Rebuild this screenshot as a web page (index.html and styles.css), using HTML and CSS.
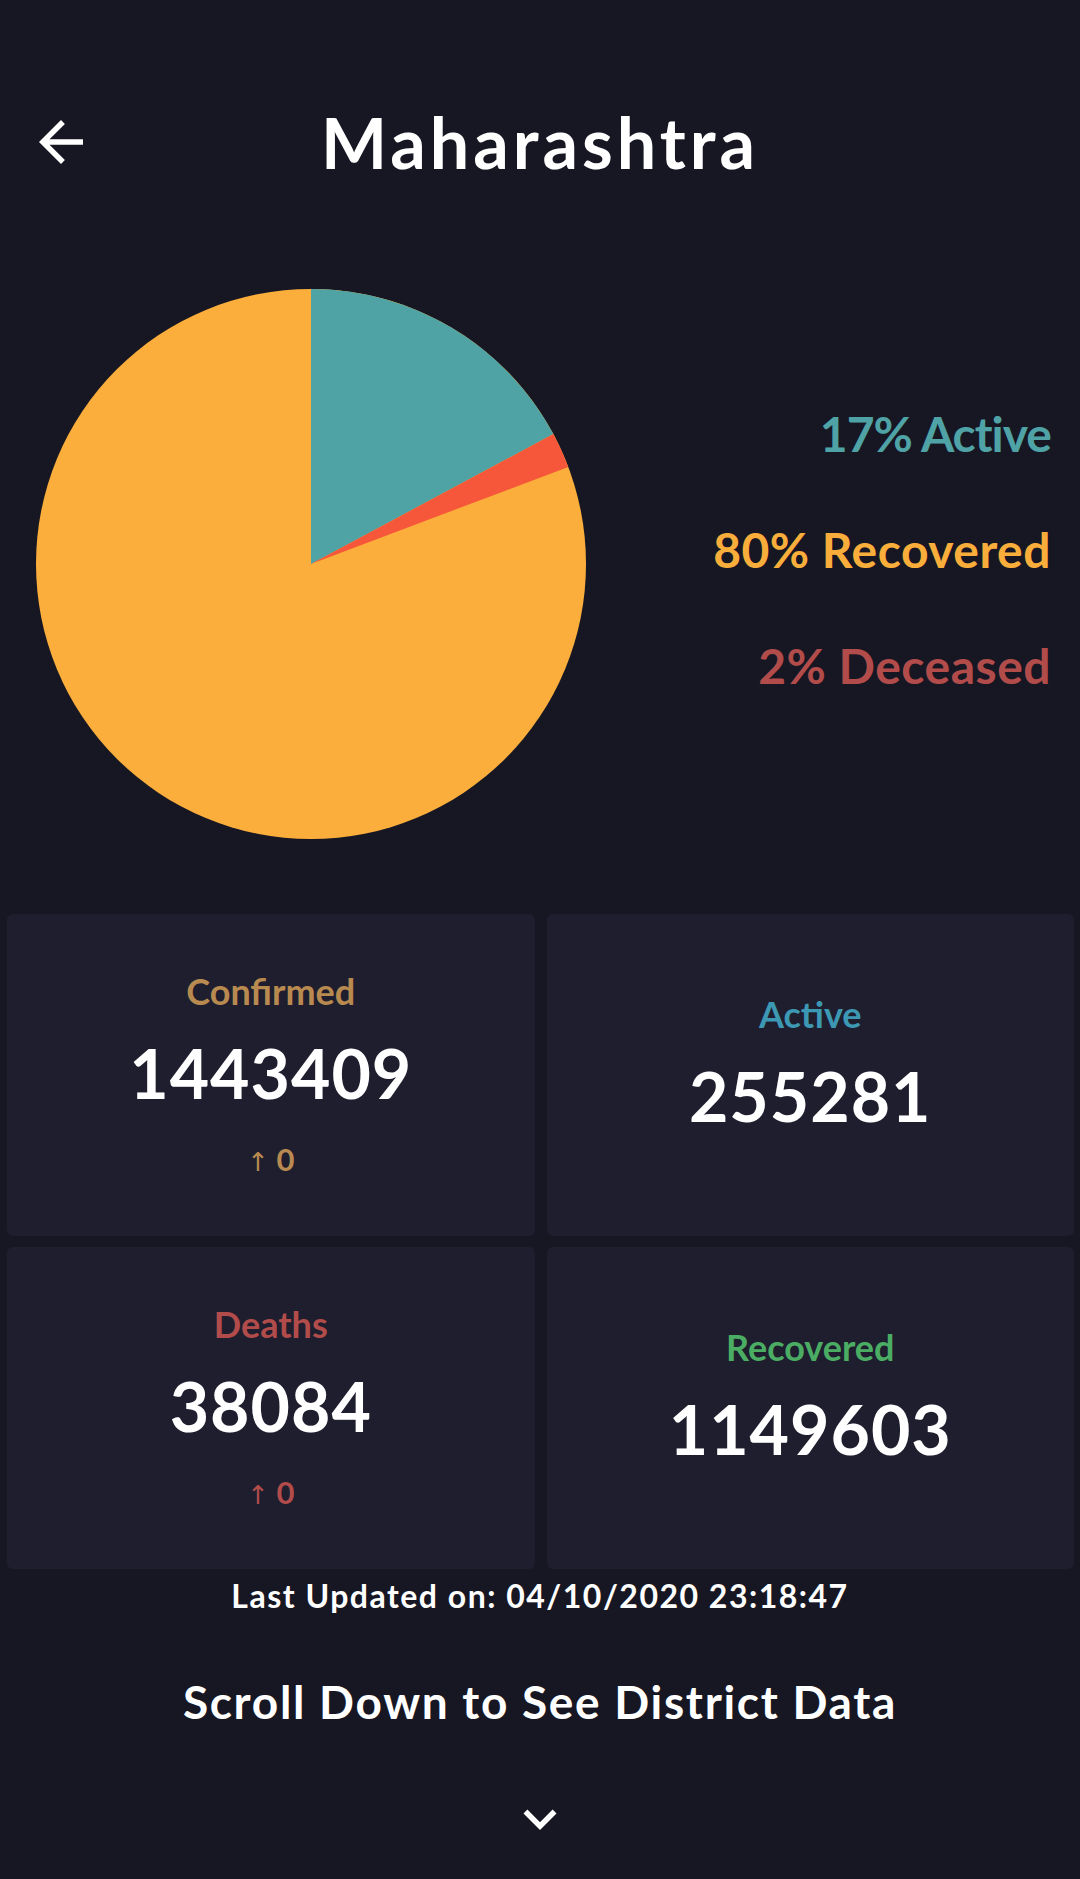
FILE: index.html
```html
<!DOCTYPE html>
<html lang="en">
<head>
<meta charset="utf-8">
<title>Maharashtra</title>
<link rel="stylesheet" href="styles.css">
</head>
<body>
<div class="page">
  <header class="topbar">
    <svg class="back" viewBox="0 0 24 24" aria-label="Back"><path d="M20 11H7.83l5.59-5.59L12 4l-8 8 8 8 1.41-1.41L7.83 13H20v-2z" fill="#ffffff"/></svg>
    <h1 class="title">Maharashtra</h1>
    <span class="spacer"></span>
  </header>

  <section class="chart">
    <svg class="pie" viewBox="-275 -275 550 550">
      <circle cx="0" cy="0" r="275" fill="#fbae3b"/>
      <path d="M0 0 L0 -275 A275 275 0 0 1 242.4 -129.9 Z" fill="#4fa3a5"/>
      <path d="M0 0 L242.4 -129.9 A275 275 0 0 1 257.3 -97.1 Z" fill="#f6573a"/>
    </svg>
    <div class="legend">
      <div class="legend-item legend-active">17% Active</div>
      <div class="legend-item legend-recovered">80% Recovered</div>
      <div class="legend-item legend-deceased">2% Deceased</div>
    </div>
  </section>

  <section class="cards">
    <div class="card">
      <div class="card-label label-confirmed">Confirmed</div>
      <div class="card-value">1443409</div>
      <div class="card-delta label-confirmed"><span class="arrow">↑</span> 0</div>
    </div>
    <div class="card card-nodelta">
      <div class="card-label label-active">Active</div>
      <div class="card-value">255281</div>
    </div>
    <div class="card">
      <div class="card-label label-deaths">Deaths</div>
      <div class="card-value">38084</div>
      <div class="card-delta label-deaths"><span class="arrow">↑</span> 0</div>
    </div>
    <div class="card card-nodelta">
      <div class="card-label label-recovered">Recovered</div>
      <div class="card-value">1149603</div>
    </div>
  </section>

  <p class="updated">Last Updated on: 04/10/2020 23:18:47</p>
  <p class="scroll">Scroll Down to See District Data</p>
  <div class="chevron-wrap">
    <svg class="chevron" viewBox="0 0 24 24"><path d="M16.59 8.59L12 13.17 7.41 8.59 6 10l6 6 6-6z" fill="#ffffff"/></svg>
  </div>
</div>
</body>
</html>
```

FILE: styles.css
```css
html, body {
  margin: 0;
  padding: 0;
  background: #171724;
}

body {
  font-family: "Lato", "Noto Sans", sans-serif;
  font-weight: 700;
  color: #ffffff;
  width: 1080px;
  min-height: 1879px;
}

.page {
  display: flex;
  flex-direction: column;
}

.topbar {
  display: grid;
  grid-template-columns: 66px 1fr 66px;
  align-items: center;
  padding: 107px 28px 0 28px;
}

.back {
  width: 66px;
  height: 66px;
  display: block;
}

.title {
  margin: 0;
  text-align: center;
  font-size: 70px;
  line-height: 70px;
  font-weight: 700;
  letter-spacing: 4px;
}

.chart {
  display: flex;
  justify-content: space-between;
  align-items: flex-start;
  margin-top: 112px;
  padding: 0 29px 0 36px;
}

.pie {
  width: 550px;
  height: 550px;
  display: block;
}

.legend {
  margin-top: 87px;
  display: flex;
  flex-direction: column;
  align-items: flex-end;
}

.legend-item {
  font-size: 48px;
  line-height: 116px;
  letter-spacing: 0.5px;
}

.legend-active { color: #4fa3a6; letter-spacing: -1px; }
.legend-recovered { color: #f9ae3b; }
.legend-deceased { color: #b24c4a; }

.cards {
  display: grid;
  grid-template-columns: 1fr 1fr;
  grid-auto-rows: 322px;
  column-gap: 12px;
  row-gap: 11px;
  margin-top: 75px;
  padding: 0 6px 0 7px;
}

.card {
  background: #1e1e2f;
  border-radius: 6px;
  display: flex;
  flex-direction: column;
  align-items: center;
  justify-content: center;
}

.card-nodelta {
  padding-bottom: 22px;
  box-sizing: border-box;
}

.card-label {
  font-size: 36px;
  line-height: 44px;
}

.card-value {
  font-size: 68px;
  line-height: 80px;
  margin-top: 20px;
  color: #ffffff;
  letter-spacing: 1px;
}

.card-delta {
  font-size: 31px;
  line-height: 40px;
  margin-top: 26px;
}

.card-delta .arrow {
  font-weight: 400;
  font-family: "DejaVu Sans", sans-serif;
  font-size: 26px;
}

.label-confirmed { color: #b98a50; }
.label-active { color: #3d98b3; }
.label-deaths { color: #b24c4a; }
.label-recovered { color: #4bad63; }

.updated {
  margin: 7px 0 0 0;
  text-align: center;
  font-size: 32px;
  line-height: 40px;
  letter-spacing: 1.5px;
}

.scroll {
  margin: 58px 0 0 0;
  text-align: center;
  font-size: 46px;
  line-height: 56px;
  letter-spacing: 1.7px;
}

.chevron-wrap {
  display: flex;
  justify-content: center;
  margin-top: 56px;
}

.chevron {
  width: 66px;
  height: 66px;
  display: block;
}
```
